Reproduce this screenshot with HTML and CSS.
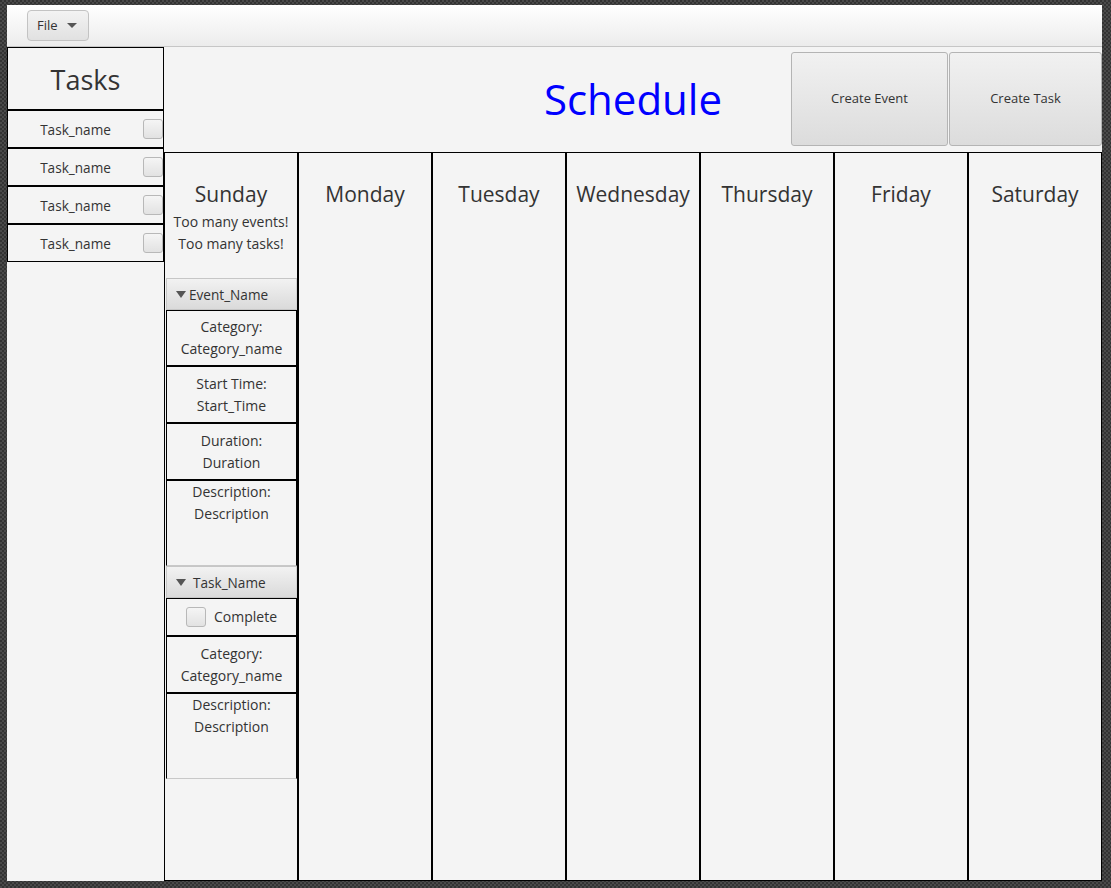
FILE: index.html
```html
<!DOCTYPE html>
<html lang="en">
<head>
    <meta charset="UTF-8">
    <meta name="viewport" content="width=device-width, initial-scale=1.0">
    <title>Schedule</title>
    <link rel="stylesheet" href="styles.css">
</head>
<body>

    <div class="window">
        <div class="menubar">
            <div class="menu-btn">File <span class="caret"></span></div>
        </div>

        <div class="main">
            <aside class="sidebar">
                <div class="tasks-title">Tasks</div>
                <div class="task-row"><span class="task-name">Task_name</span><span class="check"></span></div>
                <div class="task-row"><span class="task-name">Task_name</span><span class="check"></span></div>
                <div class="task-row"><span class="task-name">Task_name</span><span class="check"></span></div>
                <div class="task-row"><span class="task-name">Task_name</span><span class="check"></span></div>
            </aside>

            <section class="schedule">
                <header class="schedule-head">
                    <div></div>
                    <h1 class="title">Schedule</h1>
                    <div class="actions">
                        <button class="btn btn-event">Create Event</button>
                        <button class="btn btn-task">Create Task</button>
                    </div>
                </header>

                <div class="week">
                    <div class="day">
                        <div class="day-head">
                            <div class="day-name">Sunday</div>
                            <div class="warn">Too many events!</div>
                            <div class="warn">Too many tasks!</div>
                        </div>

                        <div class="pane">
                            <div class="pane-title"><span class="arrow"></span><span class="pane-text">Event_Name</span></div>
                            <div class="box h56">Category:<br>Category_name</div>
                            <div class="box h57">Start Time:<br>Start_Time</div>
                            <div class="box h57">Duration:<br>Duration</div>
                            <div class="box box-last">Description:<br>Description</div>
                        </div>

                        <div class="pane">
                            <div class="pane-title"><span class="arrow"></span><span class="pane-text wide">Task_Name</span></div>
                            <div class="box box-check"><span class="check"></span>Complete</div>
                            <div class="box h57">Category:<br>Category_name</div>
                            <div class="box box-last">Description:<br>Description</div>
                        </div>
                    </div>
                    <div class="day"><div class="day-head"><div class="day-name">Monday</div></div></div>
                    <div class="day"><div class="day-head"><div class="day-name">Tuesday</div></div></div>
                    <div class="day"><div class="day-head"><div class="day-name">Wednesday</div></div></div>
                    <div class="day"><div class="day-head"><div class="day-name">Thursday</div></div></div>
                    <div class="day"><div class="day-head"><div class="day-name">Friday</div></div></div>
                    <div class="day"><div class="day-head"><div class="day-name">Saturday</div></div></div>
                </div>
            </section>
        </div>
    </div>

</body>
</html>
```

FILE: styles.css
```css
* {
    box-sizing: border-box;
}

body {
    margin: 0;
    width: 1111px;
    height: 888px;
    overflow: hidden;
    background-color: #3d3d3d;
    background-image: repeating-conic-gradient(#4a4a4a 0 25%, #333333 0 50%);
    background-size: 4px 4px;
    font-family: "Open Sans", "Noto Sans", sans-serif;
    color: #333333;
}

.window {
    margin: 5px 0 0 7px;
    width: 1095px;
    height: 876px;
    background-color: #f4f4f4;
    display: flex;
    flex-direction: column;
}

/* menu bar */
.menubar {
    height: 42px;
    flex-shrink: 0;
    background: linear-gradient(#ffffff, #ececec);
    border-bottom: 1px solid #c6c6c6;
    padding: 5px 0 0 20px;
}

.menu-btn {
    width: 62px;
    height: 31px;
    border: 1px solid #c3c3c3;
    border-radius: 4px;
    background: linear-gradient(#f3f3f3, #e1e1e1);
    font-size: 13px;
    line-height: 29px;
    padding-left: 9px;
    display: flex;
    align-items: center;
    gap: 9px;
}

.caret {
    width: 0;
    height: 0;
    border-left: 5px solid transparent;
    border-right: 5px solid transparent;
    border-top: 5px solid #555555;
}

.main {
    flex: 1;
    display: flex;
}

/* task sidebar */
.sidebar {
    width: 157px;
    flex-shrink: 0;
}

.tasks-title {
    height: 63px;
    border: 1px solid #000;
    font-size: 27px;
    display: flex;
    align-items: center;
    justify-content: center;
    padding-top: 2px;
}

.task-row {
    height: 38px;
    border: 1px solid #000;
    display: flex;
    align-items: center;
    font-size: 13.6px;
}

.task-name {
    flex: 1;
    text-align: center;
}

.check {
    width: 20px;
    height: 20px;
    border: 1px solid #b8b8b8;
    border-radius: 3px;
    background: linear-gradient(#f5f5f5, #e2e2e2);
    display: inline-block;
    flex-shrink: 0;
}

/* schedule */
.schedule {
    width: 938px;
    display: flex;
    flex-direction: column;
}

.schedule-head {
    height: 105px;
    display: grid;
    grid-template-columns: 1fr auto 1fr;
    align-items: start;
}

.title {
    margin: 0;
    align-self: center;
    font-size: 42px;
    font-weight: normal;
    color: #0000ff;
    padding-bottom: 2px;
}

.actions {
    display: flex;
    justify-content: flex-end;
    gap: 1px;
    padding-top: 5px;
}

.btn {
    height: 94px;
    border: 1px solid #b4b4b4;
    border-radius: 3px;
    background: linear-gradient(#f1f1f1, #dcdcdc);
    font-family: "Open Sans", "Noto Sans", sans-serif;
    font-size: 13px;
    color: #333333;
    padding: 0 0 2px;
}

.btn-event {
    width: 157px;
}

.btn-task {
    width: 153px;
}

.week {
    height: 729px;
    display: grid;
    grid-template-columns: repeat(7, 134px);
}

.day {
    border: 1px solid #000;
}

.day-head {
    height: 125px;
    padding-top: 27px;
    text-align: center;
}

.day-name {
    font-size: 21px;
    line-height: 28px;
    margin-bottom: 3px;
}

.warn {
    font-size: 14px;
    line-height: 22px;
}

/* titled panes */
.pane {
    margin-left: 1px;
}

.pane-title {
    height: 32px;
    border: 1px solid #c6c6c6;
    border-right-color: #d4d4d4;
    background: linear-gradient(#f2f2f2, #dadada);
    display: flex;
    align-items: center;
    padding-left: 9px;
    font-size: 13.6px;
}

.arrow {
    width: 0;
    height: 0;
    border-left: 5px solid transparent;
    border-right: 5px solid transparent;
    border-top: 7px solid #555555;
    margin-right: 3px;
}

.pane-text.wide {
    margin-left: 4px;
}

.box {
    border: 1px solid #000;
    text-align: center;
    font-size: 14px;
    line-height: 22px;
    padding-top: 5px;
}

.h56 {
    height: 56px;
}

.h57 {
    height: 57px;
    padding-top: 6px;
}

.box-last {
    height: 86px;
    padding-top: 0;
    border-bottom-color: #c8c8c8;
}

.box-check {
    height: 38px;
    padding-top: 0;
    display: flex;
    align-items: center;
    justify-content: center;
    gap: 8px;
}
```
